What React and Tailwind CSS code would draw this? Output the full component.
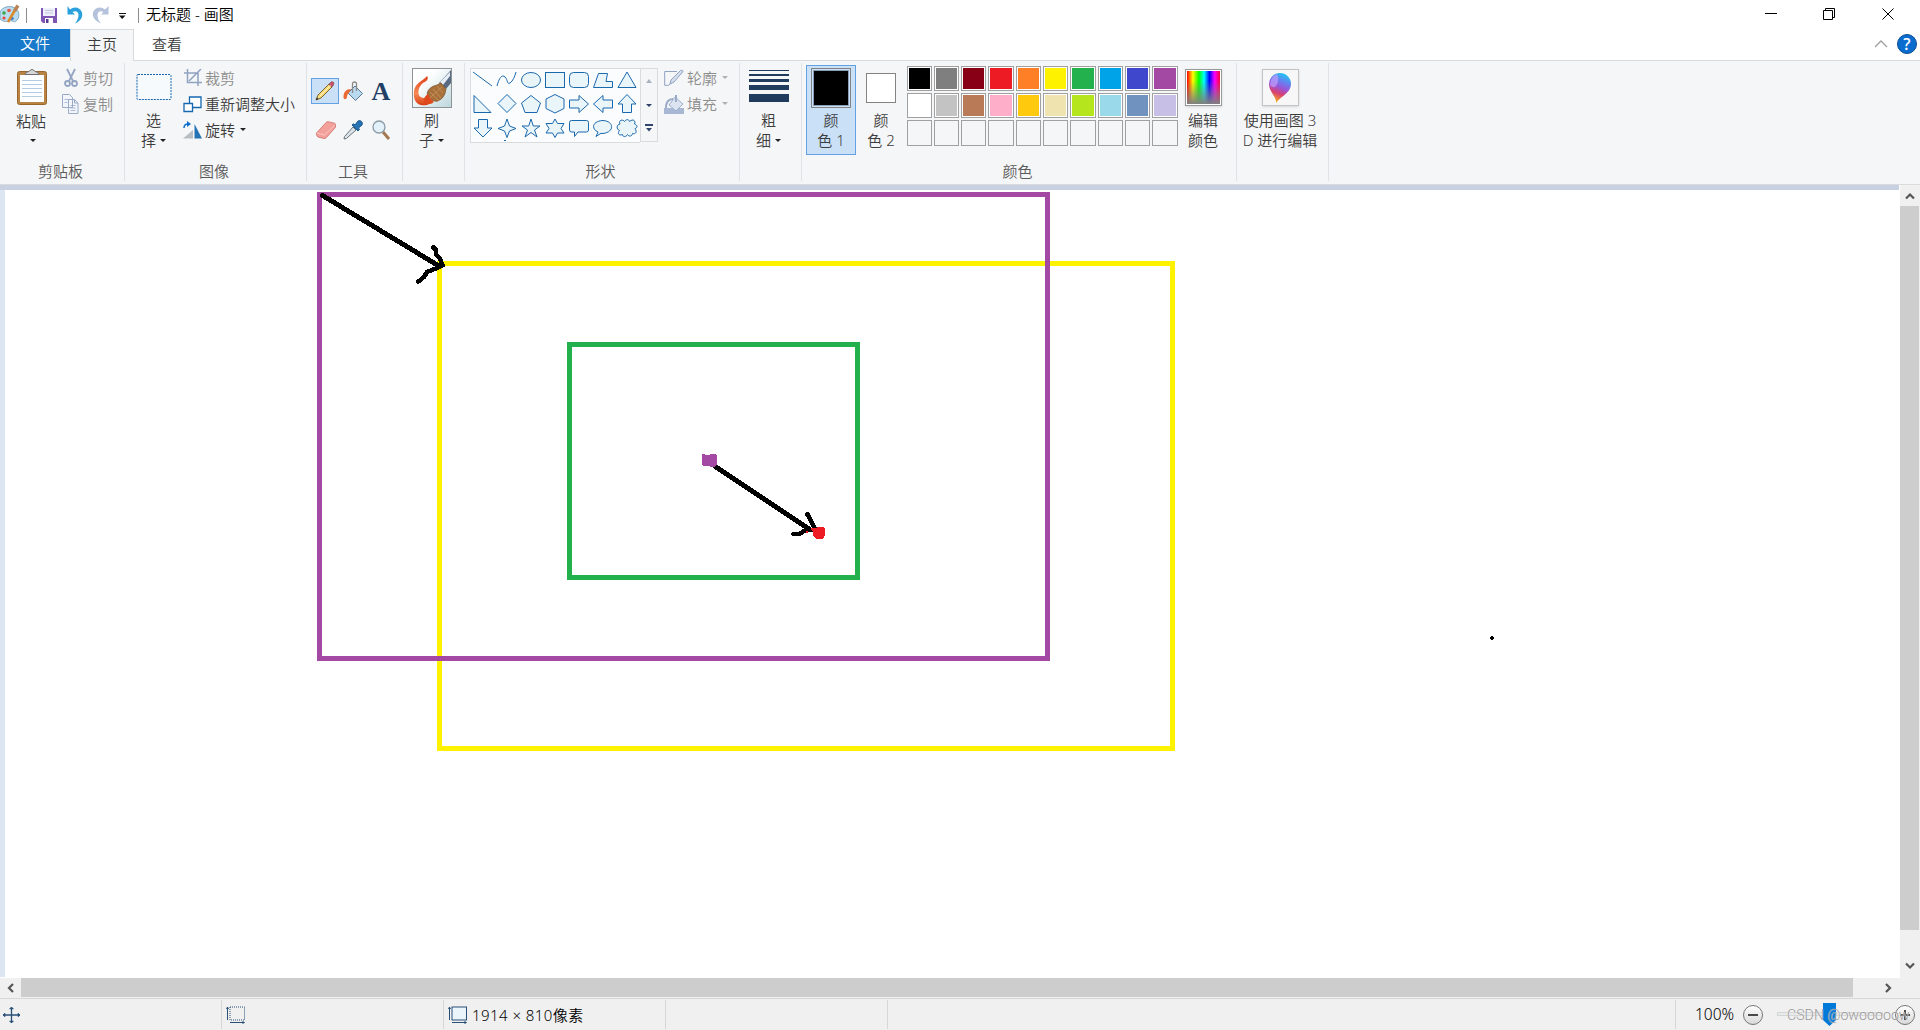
import React from "react";

const SHAPES = [
  <path d="M2 4 21 18" />,
  <path d="M2 18C4 10 7 6 10 9S12 17 15 15 20 8 21 4" />,
  <ellipse cx="12" cy="12" rx="9.5" ry="7.5" />,
  <rect x="2.5" y="4.500" width="19" height="15" />,
  <rect x="2.5" y="4.500" width="19" height="15" rx="4" />,
  <path d="M7.500 5.500h9L15 13.500h6.500v6h-19z" />,
  <path d="M12 4 21 19.500H3z" />,
  <path d="M3 3.500V20.500H20z" />,
  <path d="M12 2.500 21 11.500 12 20.500 3 11.500z" />,
  <path d="M12 3.500 21.500 11 18 20.500H6L2.500 11z" />,
  <path d="M12 2.500 21 7V16.500L12 21 3 16.500V7z" />,
  <path d="M2.500 8H12V3.500L21.500 12 12 20.500V16H2.500z" />,
  <path d="M21.500 8H12V3.500L2.500 12 12 20.500V16H21.500z" />,
  <path d="M12 2.500 21 12H16.500V20.500H7.500V12H3z" />,
  <path d="M12 21 21 12H16.500V3.500H7.500V12H3z" />,
  <path d="M12 3 14.500 10 21 12.500 14.500 15 12 21.500 9.500 15 3 12.500 9.500 10z" />,
  <path d="M12 3 14.300 10H21L15.500 14 18 21 12 16.500 6 21 8.500 14 3 10H9.700z" />,
  <path d="M12 3 14.500 7.500H21L18 12.500 21 17H14.500L12 21.500 9.500 17H3L6 12.500 3 7.500H9.500z" />,
  <path d="M4.500 4.500H19.500Q21.500 4.500 21.500 6.500V14Q21.500 16 19.500 16H11L7.500 20.500V16H4.500Q2.500 16 2.500 14V6.500Q2.500 4.500 4.500 4.500z" />,
  <path d="M7 16C0 13 1 5 12 4.500 23 5 24 16 12 17.500L10 17.300 5 20.500z" />,
  <path d="M5 8C3 4 8 3 9.500 5.500 11 3 14 3 14.500 5.500 18 2.500 21 4.500 19.500 8 23 9 22.500 12 20 12.500 22.500 16 20.500 18.500 17.500 17.500 17 21 13.500 20.500 12.500 18.500 11 21.500 7.500 21 7.500 18.500 4 20 2 17.500 4.500 14.500 1 13 1.500 8.500 5 8z" />,
];

const ROW1 = ["#000000", "#7f7f7f", "#880015", "#ed1c24", "#ff7f27", "#fff200", "#22b14c", "#00a2e8", "#3f48cc", "#a349a4"];
const ROW2 = ["#ffffff", "#c3c3c3", "#b97a57", "#ffaec9", "#ffc90e", "#efe4b0", "#b5e61d", "#99d9ea", "#7092be", "#c8bfe7"];

function Caret({ className = "text-[#222]" }) {
  return (
    <svg width="6" height="3" viewBox="0 0 6 3" className={className}>
      <path d="M0 0h6L3 3z" fill="currentColor" />
    </svg>
  );
}

function Group({ label, className, children }) {
  return (
    <section className={`flex h-[118px] flex-col border-r border-[#e0e2e5] ${className}`}>
      <div className="flex h-[98px] items-start">{children}</div>
      <div className="h-5 pr-[3px] text-center leading-5 text-[#5a5a5a]">{label}</div>
    </section>
  );
}

function BigButton({ icon, first, second, caret, className }) {
  return (
    <div className={`flex shrink-0 flex-col items-center ${className}`}>
      <div className="flex h-[47px] w-full justify-center">{icon}</div>
      <div className="h-5 leading-5">{first}</div>
      <div className="flex h-5 items-center gap-1 whitespace-nowrap leading-5">
        {second}
        {caret && <Caret />}
      </div>
    </div>
  );
}

function Row({ icon, label, disabled, caret, className = "" }) {
  return (
    <div className={`flex h-[26px] items-center whitespace-nowrap ${disabled ? "text-[#8d8d8d]" : ""}`}>
      <span className={`flex shrink-0 justify-center ${className}`}>{icon}</span>
      <span>{label}</span>
      {caret && <span className="mb-px ml-[5px] flex"><Caret className={disabled ? "text-[#b0b0b0]" : "text-[#222]"} /></span>}
    </div>
  );
}

function TitleBar() {
  return (
    <header className="flex h-[29px] items-start bg-white text-black">
      <svg width="22" height="29" viewBox="0 0 22 29">
        <path d="M0 12C2 7 10 5 15 8c5 3 5 10 1 13-2 2-4-1-6 0s-7 1-10-2z" fill="#b9dcef" stroke="#7fa9c4" />
        <circle cx="4" cy="13" r="1.800" fill="#3ca64b" />
        <circle cx="9" cy="10.500" r="1.800" fill="#e9573f" />
        <circle cx="4" cy="18" r="1.600" fill="#e5483c" />
        <circle cx="12" cy="18.500" r="1.800" fill="#3f83cf" />
        <path d="M8 22 15 10" stroke="#d98a2b" strokeWidth="2.500" />
        <path d="M14.500 11 18 5.500" stroke="#b98454" strokeWidth="3.500" />
      </svg>
      <div className="ml-1 mt-2 h-[15px] w-px bg-[#8c8c8c]" />
      <svg className="ml-[14px]" width="17" height="29" viewBox="0 0 17 29">
        <path d="M0 8h16v15H2l-2-2z" fill="#7e57b5" />
        <path d="M2 8h12v8H2z" fill="#eef1fa" />
        <path d="M4 10.500h8M4 13h8" stroke="#c3c5df" />
        <path d="M4 18h8v5H4z" fill="#fff" />
        <path d="M5 19h2.500v4H5z" fill="#5b3c8f" />
      </svg>
      <svg className="ml-[8px]" width="18" height="29" viewBox="0 0 18 29">
        <path d="M1.500 6V14.500H9L6.500 12C10 10 13 12 12.500 16 12 19 11 21 9 23.500 15 21 17 17 16 12.500 14 7 8 6 4 9.500z" fill="#2ba0de" />
      </svg>
      <svg className="ml-[8px]" width="18" height="29" viewBox="0 0 18 29">
        <path d="M16.500 6V14.500H9L11.500 12C8 10 5 12 5.500 16 6 19 7 21 9 23.500 3 21 0 17 1 12.500 3 7 9 6 13 9.500z" fill="#b5c2dc" />
      </svg>
      <svg className="ml-[8px]" width="8" height="29" viewBox="0 0 8 29">
        <path d="M1 13.500h7" stroke="#111" />
        <path d="M1 15.500h6.500L4.200 19z" fill="#111" />
      </svg>
      <div className="ml-[12px] mt-2 h-[15px] w-px bg-[#8c8c8c]" />
      <h1 className="ml-[7px] leading-[28px]">无标题 - 画图</h1>
      <svg className="ml-auto mr-[24px]" width="132" height="29" viewBox="0 0 132 29" fill="none" stroke="#000">
        <path d="M1 13.500h12" />
        <path d="M59.500 10.500h9v9h-9zM61.500 10.500v-2h9v9h-2" />
        <path d="m118.500 8.500 11 11m0-11-11 11" />
      </svg>
    </header>
  );
}

function Tabs() {
  return (
    <nav className="flex h-8 bg-white">
      <div className="h-7 w-[70px] bg-[#1979ca] text-center leading-[28px] text-white">文件</div>
      <div className="h-8 w-16 border-x border-t border-[#d9dbdd] bg-[#f5f6f7] text-center leading-[28px]">主页</div>
      <div className="flex flex-1 items-start border-b border-[#d9dbdd]">
        <div className="ml-[18px] leading-[30px]">查看</div>
        <svg className="ml-auto mr-[3px] mt-[4px]" width="44" height="22" viewBox="0 0 44 22">
          <path d="m2 14 6-6 6 6" fill="none" stroke="#a0a0a0" strokeWidth="1.300" />
          <circle cx="34" cy="11" r="9.500" fill="#0a6cce" stroke="#0d4f91" />
          <text x="34" y="17" textAnchor="middle" fill="#fff" className="font-['Open_Sans',sans-serif] text-[16px] font-semibold">?</text>
        </svg>
      </div>
    </nav>
  );
}

function ClipboardGroup() {
  return (
    <Group label="剪贴板" className="w-[125px]">
      <div className="flex w-[62px] flex-col items-center">
        <svg className="ml-[2px] mt-[5px]" width="34" height="43" viewBox="0 0 34 43">
          <rect x="2.500" y="3.500" width="29" height="33" rx="2" fill="#b98443" stroke="#96682d" />
          <path d="M5 7h24v27H5z" fill="#fdfeff" />
          <path d="M7 12.500h20M7 16.500h20M7 20.500h20M7 24.500h20M7 28.500h20" stroke="#b7cbe0" />
          <path d="M10 6.500q1-3 4-3 3-4 6 0 3 0 4 3z" fill="#d8d8d8" stroke="#6d6d6d" />
        </svg>
        <div className="leading-5">粘贴</div>
        <div className="ml-[4px] mt-[8px]"><Caret /></div>
      </div>
      <div className="pt-[2px]">
        <Row disabled className="w-[21px] pr-[4px]" label="剪切" icon={
          <svg width="14" height="20" viewBox="0 0 14 20" fill="none" stroke="#94a5c3" strokeWidth="1.800">
            <path d="M3 1 9 13M11 1 5 13" /><circle cx="3.500" cy="15.500" r="2.500" /><circle cx="10.500" cy="15.500" r="2.500" />
          </svg>} />
        <Row disabled className="w-[21px] pr-[4px]" label="复制" icon={
          <svg width="17" height="20" viewBox="0 0 17 20" fill="#f2f6fc" stroke="#9aabc8">
            <path d="M.5.500h7l3 3v10H.5zM6.500 5.500h6l3.500 3.500v10.500H6.500zM12.500 5.500V9H16" />
            <path d="M2.500 5.500h5M2.500 8.500h3M8.500 11.500h5M8.500 14h5M8.500 16.500h5" strokeWidth=".8" />
          </svg>} />
      </div>
    </Group>
  );
}

function ImageGroup() {
  return (
    <Group label="图像" className="w-[182px]">
      <BigButton className="w-[57px]" caret first="选" second="择" icon={
        <svg className="mt-[10px]" width="36" height="28" viewBox="0 0 36 28">
          <rect x="1" y="1.500" width="34" height="25" rx="1" fill="#f7fafd" stroke="#1467b0" strokeDasharray="2 1" />
        </svg>} />
      <div className="pt-[2px]">
        <Row disabled className="w-[23px] pr-[3px]" label="裁剪" icon={
          <svg width="19" height="18" viewBox="0 0 19 18" fill="none" stroke="#90a3c1" strokeWidth="1.500">
            <path d="M1 4h14v13M4.500 0v13.500H19M18 0 6 12" />
          </svg>} />
        <Row className="w-[23px] pr-[3px]" label="重新调整大小" icon={
          <svg width="19" height="17" viewBox="0 0 19 17" stroke="#1467b0" fill="#fff">
            <path d="M6.500 1H18v10.500H6.500z" strokeWidth="1.300" /><path d="M1 7.500h8.500v8H1z" strokeWidth="1.300" />
          </svg>} />
        <Row caret className="w-[23px] pr-[3px]" label="旋转" icon={
          <svg width="19" height="18" viewBox="0 0 19 18">
            <path d="M10 9v8.500H0z" fill="#b8bdc1" /><path d="M11.500 3v14.500H19z" fill="#2373b5" />
            <path d="M1 7c0-3 2-4 4-4" fill="none" stroke="#0e6fd0" strokeWidth="1.500" /><path d="M4 0l4 3-4 3z" fill="#0e6fd0" />
          </svg>} />
      </div>
    </Group>
  );
}

function ToolsGroup() {
  return (
    <Group label="工具" className="w-[96px]">
      <div className="ml-1 mt-[15px] grid grid-cols-[28px_28px_28px] grid-rows-[26px_26px] place-items-center gap-y-[13px]">
        <div className="flex h-[26px] w-7 items-center justify-center border border-[#62a2e4] bg-[#c9e0f7]">
          <svg width="20" height="20" viewBox="0 0 20 20">
            <path d="M1 19 3 14 14 3l3 3L6 17z" fill="#f7d774" stroke="#705a2c" strokeWidth=".9" />
            <path d="m14 3 2-2q2-1 3 1l-1 3-1.500 1z" fill="#d0506a" stroke="#75424f" strokeWidth=".6" />
            <path d="M4.500 15.500 15.500 4.500" stroke="#fff6c6" /><path d="M1 19l1-2.500L3.500 18z" fill="#222" />
          </svg>
        </div>
        <svg width="20" height="21" viewBox="0 0 20 21">
          <path d="m12 5 7.500 7.500-7 7L5 12z" fill="#b9d9f0" stroke="#5d7890" />
          <path d="M9.500 12V3q0-2 2-2t2 2v7" fill="none" stroke="#8b8b8b" strokeWidth="1.300" />
          <path d="M8 8C3 8 .5 11 .5 16c0 3 3 3 3.500 0C4 13 6 12 7 10z" fill="#ec6a33" />
        </svg>
        <div className="mt-[2px] font-['Liberation_Serif',serif] text-[26px] font-bold leading-[26px] text-[#1f3f66]">A</div>
        <svg className="ml-px" width="20" height="20" viewBox="0 0 20 20">
          <path d="M.5 13 10 2.500q1-1 2-.8l6.500 1.500q1 .3 1 1.500v2.500L10.500 17.500q-1 1.200-2.500 1L2 17q-1.500-.5-1.500-4z" fill="#f3a09b" stroke="#d27873" strokeWidth=".9" />
          <path d="m1 13 7.500 2L19 5" fill="none" stroke="#fbd0cd" strokeWidth=".8" />
        </svg>
        <svg width="20" height="20" viewBox="0 0 20 20">
          <path d="M1 19q0-3 2-4l7-8 3 3-8 7q-1 2-4 2z" fill="#dce4ea" stroke="#69747d" />
          <path d="m9 5 6 6 1.500-1.500-1-1.500L19 5q1-2-.500-3.500T15 1l-3 4-1.500-1.200z" fill="#2573b3" stroke="#17568f" />
        </svg>
        <svg width="20" height="20" viewBox="0 0 20 20">
          <path d="m12 12 6 7" stroke="#a37850" strokeWidth="3" />
          <circle cx="8" cy="7" r="6" fill="#e3f1fa" stroke="#8b9aa6" strokeWidth="1.300" />
        </svg>
      </div>
    </Group>
  );
}

function BrushGroup() {
  return (
    <Group className="w-[62px]">
      <BigButton className="w-[57px]" caret first="刷" second="子" icon={
        <svg className="mt-[5px]" width="40" height="40" viewBox="0 0 40 40">
          <defs>
            <linearGradient id="brushBg" x1="0" y1="0" x2="1" y2="1"><stop offset=".3" stopColor="#fff" /><stop offset="1" stopColor="#bcd7dd" /></linearGradient>
            <linearGradient id="paint" x1="0" y1="0" x2="0" y2="1"><stop stopColor="#e03f17" /><stop offset=".6" stopColor="#f68a55" /><stop offset="1" stopColor="#d93d12" /></linearGradient>
          </defs>
          <rect x=".5" y=".5" width="39" height="39" fill="url(#brushBg)" stroke="#8f9396" />
          <path d="M15 8C12 12 3 15 2 23s2 13 7 14 11-1 12-5l-7-2C4 31 5 20 11 15c4-2 6-4 4-7z" fill="url(#paint)" />
          <path d="M39 2v13l-5 6-7-6z" fill="#596b83" /><path d="m28 14 10-10v4L31 17z" fill="#e6edf5" />
          <path d="M15 26q1-7 10-9l4-2 5 6q-1 9-8 12-5 2-11-7z" fill="#a8713b" stroke="#77512d" strokeWidth=".7" />
          <path d="M12 34q-1-5 4-8 3 6 6 8-4 4-10 0z" fill="#df4a1c" />
          <path d="M18 24l9 9M21 21l8 9M25 18l6 7M18 30l12-11" stroke="#d3a069" strokeWidth=".6" />
        </svg>} />
    </Group>
  );
}

function ShapesGroup() {
  return (
    <Group label="形状" className="w-[275px]">
      <div className="ml-[5px] mt-[5px] flex">
        <div className="grid h-[75px] w-[170px] grid-cols-[repeat(7,24px)] grid-rows-[repeat(3,24px)] border border-r-0 border-[#d9dbdd] bg-[#fbfcfe]">
          {SHAPES.map((shape, i) => (
            <svg key={i} width="24" height="24" viewBox="0 1 24 24" fill={i === 0 || i === 1 ? "none" : "#eaf5fa"} stroke="#1b69ad" strokeWidth="1">
              {shape}
            </svg>
          ))}
          <div className="ml-[33px] mt-[-1px] h-px w-[2px] bg-[#1b69ad]" />
        </div>
        <div className="flex h-[74px] w-[18px] flex-col items-center border border-[#d9dbdd]">
          <svg className="mt-[10px]" width="6" height="4" viewBox="0 0 6 4"><path d="M0 4 3 0l3 4z" fill="#a9b0bf" /></svg>
          <svg className="mt-[21px]" width="6" height="3" viewBox="0 0 6 3"><path d="M0 0h6L3 3z" fill="#2f3f66" /></svg>
          <svg className="mt-[17px]" width="8" height="8" viewBox="0 0 8 8"><path d="M0 0h8v2H0zM1 4h6L4 7.500z" fill="#33446c" /></svg>
        </div>
      </div>
      <div className="ml-[6px] pt-[2px]">
        <Row disabled caret className="w-[23px] pr-[3px]" label="轮廓" icon={
          <svg width="20" height="18" viewBox="0 0 20 18" fill="none" stroke="#8fa2c2">
            <path d="M13 2.500H.7v13.800h4L19 2" /><path d="m6 15 1-4L16.500 1.500q2-1 2.500 1L10 13z" fill="#d5deeb" />
          </svg>} />
        <Row disabled caret className="w-[23px] pr-[3px]" label="填充" icon={
          <svg width="20" height="20" viewBox="0 0 20 20">
            <path d="M0 14h20v6H0z" fill="#a8b7d3" /><path d="m11 3 8 7-7 7-7-6z" fill="#dbe4f0" stroke="#9eafca" />
            <path d="M12 8V1M9 5C4 5 2 8 2 14" fill="none" stroke="#9aabc8" strokeWidth="2" />
          </svg>} />
      </div>
    </Group>
  );
}

function SizeGroup() {
  return (
    <Group className="w-[62px]">
      <BigButton className="w-[57px]" caret first="粗" second="细" icon={
        <svg className="mt-[7px]" width="40" height="33" viewBox="0 0 40 33" fill="#1f3b5e">
          <path d="M0 0h40v1H0zM0 4h40v2H0zM0 9h40v3H0zM0 15h40v5H0zM0 24h40v8H0z" />
        </svg>} />
    </Group>
  );
}

function Swatch({ color }) {
  return (
    <div className={`h-full border border-[#a0a0a0] p-px ${color ? "bg-white" : "bg-[#f5f6f7]"}`}>
      {color && <div className="h-full w-full" style={{ backgroundColor: color }} />}
    </div>
  );
}

function ColorsGroup() {
  return (
    <Group label="颜色" className="w-[435px]">
      <div className="ml-1 mt-[2px] h-[90px] w-[50px] shrink-0 border border-[#62a2e4] bg-[#c9e0f7]">
        <div className="mx-auto mt-[2px] h-10 w-10 border border-[#838383] bg-[#c9e0f7] p-px">
          <div className="h-full w-full border border-[#8aa0b8] bg-black" />
        </div>
        <div className="mt-[2px] text-center leading-5">颜<br />色 1</div>
      </div>
      <BigButton className="w-[50px]" first="颜" second="色 2" icon={<div className="mt-[10px] h-[30px] w-[30px] border border-[#838383] bg-white" />} />
      <div className="ml-px mt-[3px] grid shrink-0 grid-cols-[25px_25px_25px_26px_25px_25px_26px_25px_25px_26px] grid-rows-[25px_25px_26px] gap-[2px]">
        {[...ROW1, ...ROW2, ...Array(10).fill(null)].map((c, i) => <Swatch key={i} color={c} />)}
      </div>
      <BigButton className="w-[50px]" first="编辑" second="颜色" icon={
        <div className="mt-[6px] h-[37px] w-[37px] border border-[#999] bg-white p-px shadow-sm">
          <div className="h-full w-full bg-[linear-gradient(to_right,#f00,#ff0_18%,#0f0_36%,#0ff_52%,#00f_68%,#f0f_84%,#f03)]">
            <div className="h-full w-full bg-gradient-to-b from-transparent from-30% to-[#808080]" />
          </div>
        </div>} />
    </Group>
  );
}

function Paint3DGroup() {
  return (
    <Group className="w-[92px]">
      <BigButton className="ml-[3px] w-[80px]" first="使用画图 3" second="D 进行编辑" icon={
        <div className="mt-[6px] flex h-[37px] w-[37px] items-center justify-center border border-[#c3c3c3] bg-[#f7f7f8] shadow-sm">
          <svg width="24" height="32" viewBox="0 0 24 32">
            <defs>
              <linearGradient id="dropFill" x1=".7" y1="0" x2=".4" y2="1">
                <stop stopColor="#18ccf2" /><stop offset=".3" stopColor="#6a7df0" /><stop offset=".5" stopColor="#9a55d6" /><stop offset=".7" stopColor="#d94071" /><stop offset="1" stopColor="#f6b518" />
              </linearGradient>
            </defs>
            <path d="M8 31C9 25 1 20 1 12A11 11 0 0 1 23 12C23 21 13 24 8 31z" fill="url(#dropFill)" />
            <path d="M2 13Q3 4 9 2q3 6-1 12-3 3-6-1z" fill="#c2a0fa" opacity=".7" />
          </svg>
        </div>} />
    </Group>
  );
}

function Canvas() {
  return (
    <svg className="block shrink-0 bg-white" width="1894" height="788" viewBox="5 190 1894 788" fill="none">
      <rect x="439.500" y="263.500" width="733" height="485" stroke="#fff200" strokeWidth="5" />
      <rect x="319.500" y="194.500" width="728" height="464" stroke="#a349a4" strokeWidth="5" />
      <rect x="569.500" y="344.500" width="288" height="233" stroke="#22b14c" strokeWidth="5" />
      <g stroke="#000" strokeWidth="5" strokeLinecap="round" strokeLinejoin="round" shapeRendering="crispEdges">
        <path d="M322.500 195.500 439 266" />
        <path d="M433.500 247.500 436 250V254L440 259 442.500 265.500 436 268.500 427 272 424 277 418.500 281.500" strokeWidth="4.500" />
        <path d="M716 467 809 529" />
        <path d="M807.500 514.500 814.500 528M793.500 534 799 534 806 530 811 530" strokeWidth="4.500" />
      </g>
      <g shapeRendering="crispEdges">
        <path d="M702 454h2l1 1h5v-1h5l2 2v9l-3 2h-4l-1-1h-6l-1-1z" fill="#a349a4" />
        <path d="M806 531h2v2h-2zM811 528h5l2-1h5l2 2v6l-2 4h-6l-4-3v-5l-2-1z" fill="#ed1c24" />
        <path d="M1491 636h2v1h1v2h-1v1h-2v-1h-1v-2h1z" fill="#000" />
      </g>
    </svg>
  );
}

function Chevron({ d }) {
  return <svg width="12" height="12" viewBox="0 0 12 12"><path d={d} fill="none" stroke="#555" strokeWidth="2.200" /></svg>;
}

function Workspace() {
  return (
    <main className="flex h-[793px]">
      <div className="w-[1899px]">
        <div className="h-[5px] bg-[#c8d1e1]" />
        <div className="flex">
          <div className="h-[787px] w-[5px] shrink-0 bg-[#dce6f2]" />
          <Canvas />
        </div>
      </div>
      <div className="flex w-[21px] flex-col items-center border-l border-white bg-[#f0f0f0]">
        <div className="flex h-[21px] items-center"><Chevron d="M2 8.500 6 4.500l4 4" /></div>
        <div className="mr-px h-[724px] w-[19px] bg-[#cdcdcd]" />
        <div className="mt-auto flex h-[24px] items-center"><Chevron d="m2 3.500 4 4 4-4" /></div>
      </div>
    </main>
  );
}

function ZoomButton({ plus }) {
  return (
    <svg width="22" height="22" viewBox="0 0 22 22">
      <defs><linearGradient id="knob" x1="0" y1="0" x2="0" y2="1"><stop stopColor="#fff" /><stop offset="1" stopColor="#d8d8d8" /></linearGradient></defs>
      <circle cx="11" cy="11" r="9.500" fill="url(#knob)" stroke="#777" />
      <path d={plus ? "M6 11h10M11 6v10" : "M6 11h10"} stroke="#4a4a4a" strokeWidth="2" />
    </svg>
  );
}

function StatusBar() {
  return (
    <footer className="relative flex h-8 items-stretch border-t border-[#d7d7d7] bg-[#f0f0f0] text-black">
      <div className="my-px flex w-[222px] items-center border-r border-[#d7d7d7] pl-[2px]">
        <svg width="19" height="18" viewBox="0 0 19 18" stroke="#294f77" fill="#294f77">
          <path d="M1 9h17M9.500 1v16" strokeWidth="1.300" />
          <path d="m3 7-2 2 2 2zM16 7l2 2-2 2zM7.500 3l2-2 2 2zM7.500 15l2 2 2-2z" strokeWidth=".5" />
        </svg>
      </div>
      <div className="my-px flex w-[222px] items-center border-r border-[#d7d7d7] pl-[4px]">
        <svg width="20" height="18" viewBox="0 0 20 18" stroke="#294f77" fill="none">
          <path d="M1.500 1.500v12.500M.5 3l1-2 1 2M4 16.500h14M16.500 15.500l2 1-2 1" /><rect x="4" y="1" width="14.500" height="13" strokeDasharray="1 1" />
        </svg>
      </div>
      <div className="my-px flex w-[222px] items-center border-r border-[#d7d7d7] pl-[4px]">
        <svg width="20" height="18" viewBox="0 0 20 18" stroke="#294f77" fill="none">
          <path d="M1.500 1.500v12.500M.5 3l1-2 1 2M4 16.500h14M16.500 15.500l2 1-2 1" /><rect x="4" y="1" width="14.500" height="13" fill="#e9f5fb" />
        </svg>
        <span className="ml-[4px] mt-px tracking-[0.45px]">1914 × 810像素</span>
      </div>
      <div className="my-px w-[222px] border-r border-[#d7d7d7]" />
      <div className="my-px flex-1 border-r border-[#d7d7d7]" />
      <div className="flex w-[244px] items-center">
        <span className="ml-[19px] w-[47px] text-[15.500px]">100%</span>
        <ZoomButton />
        <svg className="ml-[13px]" width="106" height="24" viewBox="0 0 106 24">
          <rect x=".5" y="9.500" width="105" height="3" fill="#e7eaea" stroke="#d6d6d6" />
          <path d="M46 0h13v17l-6.500 6L46 17z" fill="#0078d7" />
        </svg>
        <span className="ml-[11px] flex"><ZoomButton plus /></span>
      </div>
      <div className="absolute left-[1787px] top-[6px] whitespace-nowrap font-['Roboto',sans-serif] text-[14.200px] leading-5 text-[#969696] [text-shadow:0_0_1px_#fff]">CSDN @owooooow</div>
    </footer>
  );
}

export default function App() {
  return (
    <div className="h-[1030px] w-[1920px] overflow-hidden bg-white font-['Noto_Sans','Noto_Sans_CJK_SC',sans-serif] text-[15px] font-[350] text-[#3c3c3c]">
      <TitleBar />
      <Tabs />
      <div className="flex h-[124px] border-b border-[#d9dbdd] bg-[#f5f6f7] pt-[2px]">
        <ClipboardGroup />
        <ImageGroup />
        <ToolsGroup />
        <BrushGroup />
        <ShapesGroup />
        <SizeGroup />
        <ColorsGroup />
        <Paint3DGroup />
      </div>
      <Workspace />
      <div className="flex h-5 items-start bg-[#f0f0f0]">
        <div className="flex h-[19px] w-[21px] shrink-0 items-center justify-center"><Chevron d="m8 2-4 4 4 4" /></div>
        <div className="h-[19px] w-[1832px] shrink-0 bg-[#cdcdcd]" />
        <div className="flex h-[19px] flex-1 items-center justify-center"><Chevron d="m5 2 4 4-4 4" /></div>
      </div>
      <StatusBar />
    </div>
  );
}
